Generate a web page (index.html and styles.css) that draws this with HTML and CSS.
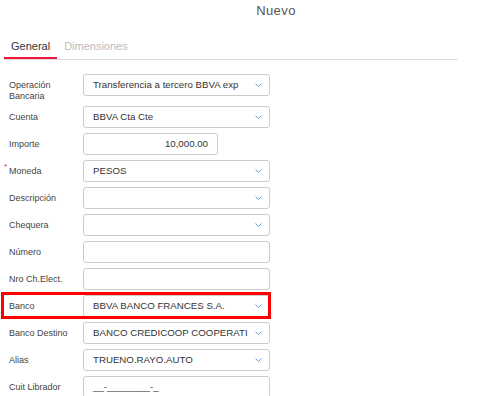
FILE: index.html
```html
<!DOCTYPE html>
<html lang="es">
<head>
    <meta charset="UTF-8">
    <meta name="viewport" content="width=device-width, initial-scale=1.0">
    <title>Nuevo</title>
    <link rel="stylesheet" href="styles.css">
</head>
<body>
    <div class="title">Nuevo</div>

    <div class="tabs">
        <div class="tab active">General</div>
        <div class="tab">Dimensiones</div>
    </div>

    <div class="form">
        <div class="row">
            <label class="label">Operación<br>Bancaria</label>
            <div class="select"><span>Transferencia a tercero BBVA exp</span><svg class="chev" viewBox="0 0 7 4"><polyline points="0.5,0.5 3.5,3.5 6.5,0.5"/></svg></div>
        </div>
        <div class="row">
            <label class="label">Cuenta</label>
            <div class="select"><span>BBVA Cta Cte</span><svg class="chev" viewBox="0 0 7 4"><polyline points="0.5,0.5 3.5,3.5 6.5,0.5"/></svg></div>
        </div>
        <div class="row">
            <label class="label">Importe</label>
            <div class="input short number">10,000.00</div>
        </div>
        <div class="row">
            <label class="label required">Moneda</label>
            <div class="select"><span>PESOS</span><svg class="chev" viewBox="0 0 7 4"><polyline points="0.5,0.5 3.5,3.5 6.5,0.5"/></svg></div>
        </div>
        <div class="row">
            <label class="label">Descripción</label>
            <div class="select"><span></span><svg class="chev" viewBox="0 0 7 4"><polyline points="0.5,0.5 3.5,3.5 6.5,0.5"/></svg></div>
        </div>
        <div class="row">
            <label class="label">Chequera</label>
            <div class="select"><span></span><svg class="chev" viewBox="0 0 7 4"><polyline points="0.5,0.5 3.5,3.5 6.5,0.5"/></svg></div>
        </div>
        <div class="row">
            <label class="label">Número</label>
            <div class="input"></div>
        </div>
        <div class="row">
            <label class="label">Nro Ch.Elect.</label>
            <div class="input"></div>
        </div>
        <div class="row highlight">
            <label class="label">Banco</label>
            <div class="select"><span>BBVA BANCO FRANCES S.A.</span><svg class="chev" viewBox="0 0 7 4"><polyline points="0.5,0.5 3.5,3.5 6.5,0.5"/></svg></div>
        </div>
        <div class="row">
            <label class="label">Banco Destino</label>
            <div class="select"><span>BANCO CREDICOOP COOPERATI</span><svg class="chev" viewBox="0 0 7 4"><polyline points="0.5,0.5 3.5,3.5 6.5,0.5"/></svg></div>
        </div>
        <div class="row">
            <label class="label">Alias</label>
            <div class="select"><span>TRUENO.RAYO.AUTO</span><svg class="chev" viewBox="0 0 7 4"><polyline points="0.5,0.5 3.5,3.5 6.5,0.5"/></svg></div>
        </div>
        <div class="row">
            <label class="label">Cuit Librador</label>
            <div class="input mask">__-________-_</div>
        </div>
    </div>
</body>
</html>
```

FILE: styles.css
```css
body {
    margin: 0;
    font-family: "Liberation Sans", Arial, sans-serif;
    color: #333;
    background: #fff;
    overflow: hidden;
}
.title {
    padding: 3px 0 0 57px;
    text-align: center;
    font-size: 13px;
    line-height: 16px;
    letter-spacing: 0.4px;
    color: #555;
}
.tabs {
    display: flex;
    width: 454px;
    margin: 17px 0 0 4px;
    border-bottom: 1px solid #ddd;
}
.tab {
    padding: 4px 7px;
    font-size: 11px;
    line-height: 13px;
    color: #bbb;
    border-bottom: 2px solid transparent;
}
.tab.active {
    color: #333;
    border-bottom-color: #f0163a;
}
.form {
    margin: 14px 0 0 4px;
    width: 266px;
}
.row {
    display: flex;
    align-items: flex-start;
    margin-bottom: 5px;
}
/* red marker drawn over the Banco row */
.row.highlight {
    position: relative;
}
.row.highlight::after {
    content: "";
    position: absolute;
    top: -3px;
    bottom: -2px;
    left: -3px;
    right: -1px;
    border: 3px solid #f00;
}
.label {
    width: 74px;
    flex-shrink: 0;
    padding: 6px 0 0 5px;
    font-size: 9px;
    line-height: 10.5px;
    color: #444;
    position: relative;
}
.label.required::before {
    content: "*";
    position: absolute;
    left: 0;
    top: 3px;
    color: #e8174a;
    font-size: 8px;
    line-height: 8px;
}
.select, .input {
    box-sizing: border-box;
    flex-shrink: 0;
    width: 187px;
    height: 22px;
    border: 1px solid #ccc;
    border-radius: 3px;
    padding: 0 7px 0 9px;
    font-size: 9.7px;
    line-height: 20px;
    color: #333;
    background: #fff;
    display: flex;
    align-items: center;
    white-space: nowrap;
}
.select span {
    flex: 1;
    min-width: 0;
}
.chev {
    width: 7px;
    height: 4px;
    margin-left: 4px;
    fill: none;
    stroke: #6d9cdc;
    stroke-width: 1;
}
.input.short {
    width: 135px;
    padding-right: 9px;
}
.input.number {
    justify-content: flex-end;
}
.input.mask {
    color: #444;
}
```
